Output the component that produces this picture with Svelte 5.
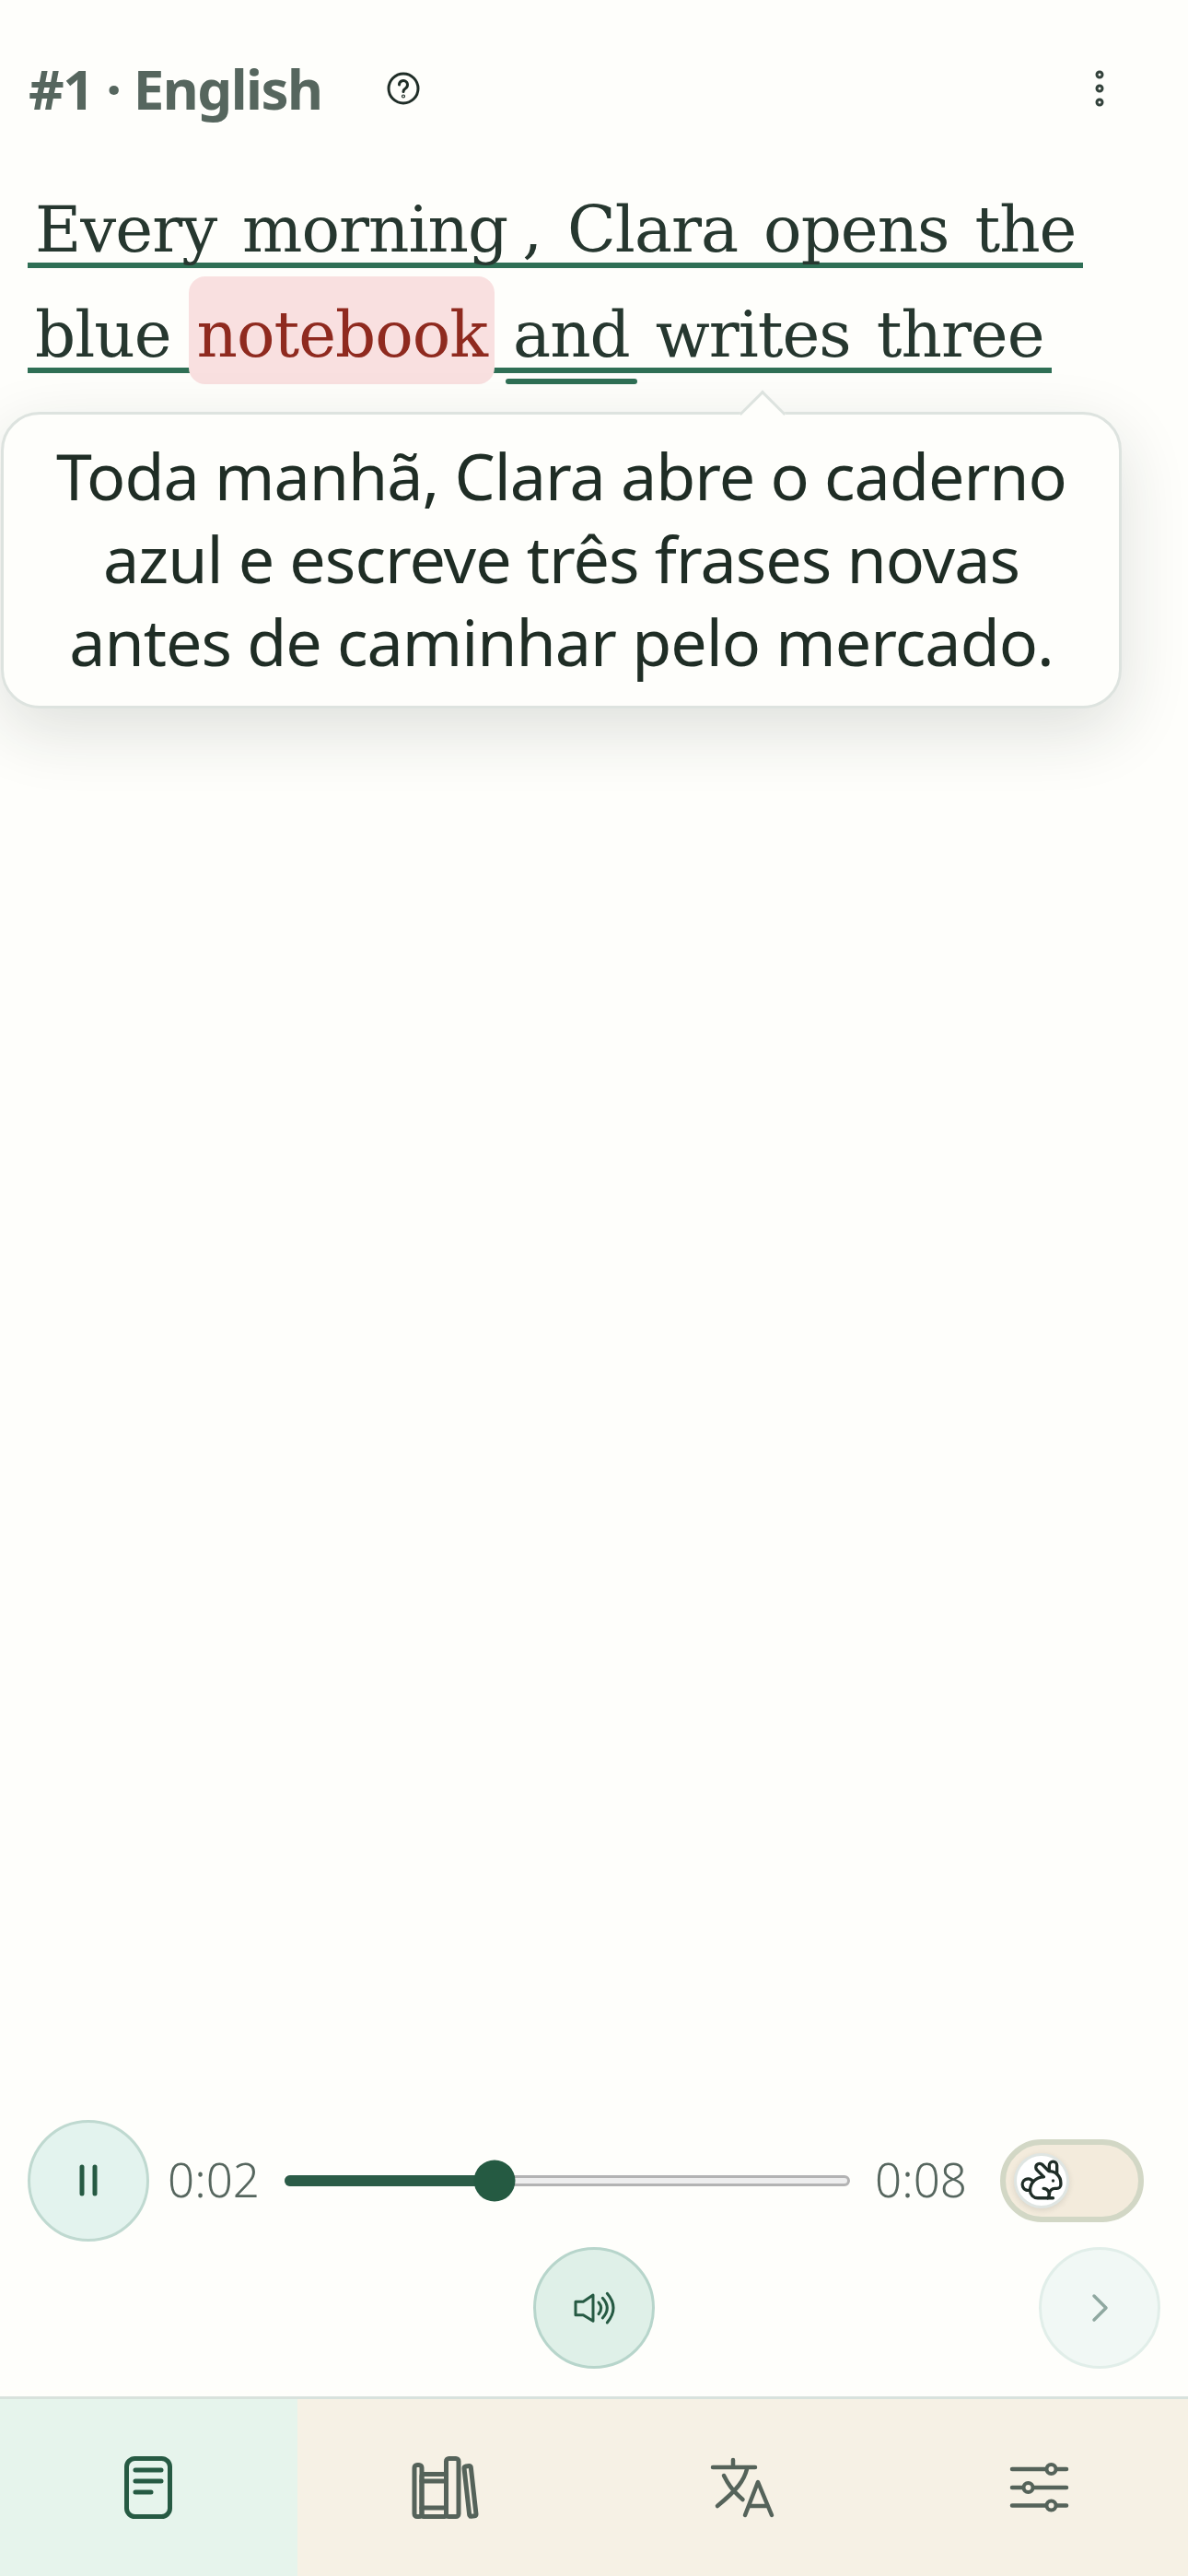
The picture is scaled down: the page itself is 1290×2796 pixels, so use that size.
<script>
  let elapsed = 2
  let duration = 8
  let progress = 37

  const line = [
    { t: 'Every' }, { t: 'morning' , glue: true }, { t: ',' }, { t: 'Clara' }, { t: 'opens' }, { t: 'the' },
    { t: 'blue' }, { t: 'notebook', hit: true }, { t: 'and', active: true }, { t: 'writes' }, { t: 'three' }
  ]

  const fmt = (s) => `0:${String(s).padStart(2, '0')}`
</script>

<div class="app">
  <header class="head">
    <h1>#1 · English</h1>
    <svg class="help" width="36" height="36" viewBox="0 0 36 36" fill="none" stroke="currentColor" stroke-width="3" stroke-linecap="round">
      <circle cx="18" cy="18" r="16" />
      <path d="M13.5 14a4.5 4.5 0 1 1 7 3.7c-1.6 1-2.5 2-2.5 3.8" />
      <circle cx="18" cy="26.5" r="0.6" />
    </svg>
    <svg class="kebab" width="18" height="48" viewBox="0 0 18 48" fill="none" stroke="currentColor" stroke-width="3">
      <circle cx="9" cy="9" r="3" />
      <circle cx="9" cy="24" r="3" />
      <circle cx="9" cy="39" r="3" />
    </svg>
  </header>

  <main class="reading">
    <p class="text">
      <span class="sentence">
        {#each line as w}
          <span class="w" class:hit={w.hit} class:active={w.active}>{w.t}</span>{#if !w.glue}{' '}{/if}
        {/each}
      </span>
    </p>

    <div class="tip">
      Toda manhã, Clara abre o caderno azul e escreve três frases novas antes de caminhar pelo mercado.
    </div>
  </main>

  <section class="player">
    <div class="row">
      <button class="round pause" aria-label="Pause">
        <svg width="24" height="36" viewBox="0 0 24 36" fill="none" stroke="currentColor" stroke-width="5" stroke-linecap="round">
          <path d="M5 3v29M19 3v29" />
        </svg>
      </button>
      <span class="time">{fmt(elapsed)}</span>
      <div class="track">
        <div class="fill" style="width: {progress}%"></div>
        <div class="knob" style="left: {progress}%"></div>
      </div>
      <span class="time">{fmt(duration)}</span>
      <div class="toggle">
        <span class="thumb">
          <svg width="50" height="50" viewBox="0 0 24 24" fill="none" stroke="currentColor" stroke-width="1.6" stroke-linecap="round" stroke-linejoin="round">
            <path d="M13 16a3 3 0 0 1 2.24 5" />
            <path d="M18 12h.01" />
            <path d="M18 21h-8a4 4 0 0 1-4-4 7 7 0 0 1 7-7h.2L9.6 6.4a1 1 0 1 1 2.8-2.8L15.8 7h.2c3.3 0 6 2.7 6 6v1a2 2 0 0 1-2 2h-1a3 3 0 0 0-3 3" />
            <path d="M20 8.54V4a2 2 0 1 0-4 0v3" />
            <path d="M7.612 12.524a3 3 0 1 0-1.6 4.3" />
          </svg>
        </span>
      </div>
    </div>

    <div class="row second">
      <button class="round speak" aria-label="Speak">
        <svg width="60" height="60" viewBox="0 0 60 60" fill="none" stroke="currentColor" stroke-width="3" stroke-linecap="round" stroke-linejoin="round">
          <path d="M10 23.3h8.3L29 16v28.3l-10.7-6.6H10z" />
          <path d="M35 24q5.4 6.3 0 12.7" />
          <path d="M39.3 19.3q10 10.9 0 21.7" />
          <path d="M44.3 14.3q13.4 15.8 0 31.7" />
        </svg>
      </button>
      <button class="round next" aria-label="Next">
        <svg width="24" height="36" viewBox="0 0 24 36" fill="none" stroke="currentColor" stroke-width="3.5" stroke-linecap="round" stroke-linejoin="round">
          <path d="M6 5l13 13L6 31" />
        </svg>
      </button>
    </div>
  </section>

  <nav class="tabs">
    <div class="tab on">
      <svg width="84" height="84" viewBox="0 0 84 84" fill="none" stroke="currentColor" stroke-width="5" stroke-linecap="round">
        <rect x="18.5" y="10.5" width="47" height="63" rx="9" />
        <path d="M28 23h28M28 35h28M28 47h17" />
      </svg>
    </div>
    <div class="tab">
      <svg width="84" height="84" viewBox="0 0 84 84" fill="none" stroke="currentColor" stroke-width="5" stroke-linecap="round" stroke-linejoin="round">
        <rect x="8" y="17.5" width="8" height="56" rx="3" />
        <rect x="16" y="27.5" width="26.5" height="46" rx="2" />
        <path d="M16 35h26.5M16 64h26.5" />
        <rect x="42.5" y="10.5" width="13.5" height="63" rx="3" />
        <path d="M64 19l3.5-.5q1.5 0 1.8 1.5L75 71q0 1.5-1.5 1.8l-4 .5q-1.5 0-1.8-1.5L62 21q0-1.5 2-2z" />
      </svg>
    </div>
    <div class="tab">
      <svg width="84" height="84" viewBox="0 0 84 84" fill="none" stroke="currentColor" stroke-width="4.5" stroke-linecap="round" stroke-linejoin="round">
        <path d="M10 20h46M32 12v8" />
        <path d="M47 22c-3 12-10 22-32 40" />
        <path d="M22 29c4 8 8 15 20.5 26" />
        <path d="M45 72l14-36 15 36M51 62h17" />
      </svg>
    </div>
    <div class="tab">
      <svg width="84" height="84" viewBox="0 0 84 84" fill="none" stroke="currentColor" stroke-width="4.5" stroke-linecap="round">
        <path d="M12 22h59M12 42h59M12 61.5h59" />
        <g fill="#f6f1e5" stroke-width="4">
          <circle cx="54.5" cy="22" r="5" />
          <circle cx="29.5" cy="42" r="5" />
          <circle cx="54.5" cy="61.5" r="5" />
        </g>
      </svg>
    </div>
  </nav>
</div>

<style>
  :global(body) {
    margin: 0;
    background: #fefefb;
  }

  .app {
    display: flex;
    flex-direction: column;
    width: 1290px;
    height: 2796px;
    overflow: hidden;
    background: #fefefb;
    color: #24352d;
    font-family: "Noto Sans", sans-serif;
  }

  .head {
    display: flex;
    align-items: center;
    height: 72px;
    padding: 60px 87px 0 31px;
  }

  h1 {
    margin: 0;
    font-size: 60px;
    line-height: 72px;
    font-weight: 700;
    color: #56665e;
    letter-spacing: -1.5px;
  }

  .help {
    margin-left: 70px;
    color: #1f2d27;
  }

  .kebab {
    margin-left: auto;
    color: #33423b;
  }

  .reading {
    flex: 1;
    position: relative;
    padding: 60px 0 0 30px;
  }

  .text {
    margin: 0;
    width: 1180px;
    font-family: "DejaVu Serif", serif;
    font-size: 69px;
    line-height: 114px;
    letter-spacing: -1px;
    word-spacing: -9px;
    color: #26372f;
  }

  .sentence {
    padding-bottom: 2px;
    background: linear-gradient(#2f6f55, #2f6f55) repeat-x left bottom / 100% 6px;
    -webkit-box-decoration-break: clone;
    box-decoration-break: clone;
  }

  .w {
    position: relative;
    padding: 0 8px;
  }

  .hit {
    display: inline-block;
    margin-top: -6px;
    padding-top: 9px;
    line-height: 108px;
    border-radius: 18px;
    background: #f9e0e0;
    color: #8f2a1f;
  }

  .active::after {
    content: "";
    position: absolute;
    left: 0;
    right: 0;
    bottom: -14px;
    height: 6px;
    border-radius: 3px;
    background: #2f6f55;
  }

  .tip {
    position: absolute;
    left: 1px;
    top: 315px;
    box-sizing: border-box;
    width: 1217px;
    height: 322px;
    padding: 21px 40px;
    border: 3px solid #dde3df;
    border-radius: 42px;
    background: #fefefb;
    box-shadow: 0 24px 72px rgba(30, 45, 38, 0.14);
    font-size: 70px;
    line-height: 90px;
    letter-spacing: -1px;
    text-align: center;
    color: #1f2d25;
  }

  .tip::before {
    content: "";
    position: absolute;
    left: 806px;
    top: -19px;
    width: 36px;
    height: 36px;
    box-sizing: border-box;
    border-top: 3px solid #dde3df;
    border-left: 3px solid #dde3df;
    background: #fefefb;
    transform: rotate(45deg);
  }

  .player {
    display: flex;
    flex-direction: column;
    gap: 6px;
    padding: 0 30px 30px;
  }

  .row {
    display: flex;
    align-items: center;
    gap: 27px;
    padding-right: 18px;
  }

  .second {
    justify-content: flex-end;
    gap: 417px;
    padding-right: 0;
  }

  .round {
    display: flex;
    align-items: center;
    justify-content: center;
    flex: none;
    box-sizing: border-box;
    width: 132px;
    height: 132px;
    padding: 0;
    border-radius: 50%;
    border: 3px solid #bfd9d0;
    background: #e3f3ee;
    color: #265a43;
  }

  .pause {
    margin-right: -7px;
  }

  .speak {
    background: #dff0e8;
    border-color: #b7d5cb;
  }

  .next {
    background: #f1f8f5;
    border-color: #e1eee9;
    color: #8fa8a0;
  }

  .time {
    flex: none;
    width: 100px;
    padding-bottom: 4px;
    font-size: 51px;
    line-height: 60px;
    color: #56665e;
    font-weight: 350;
    letter-spacing: 0;
    text-align: center;
    white-space: nowrap;
  }

  .track {
    flex: 1;
    position: relative;
    box-sizing: border-box;
    height: 12px;
    border: 3px solid #b3b3b3;
    border-radius: 6px;
    background: #eeeeee;
  }

  .fill {
    position: absolute;
    left: -3px;
    top: -3px;
    height: 12px;
    border-radius: 6px 0 0 6px;
    background: #2b5c47;
  }

  .knob {
    position: absolute;
    top: 50%;
    width: 45px;
    height: 45px;
    border-radius: 50%;
    background: #255a42;
    transform: translate(-50%, -50%);
  }

  .toggle {
    display: flex;
    align-items: center;
    flex: none;
    box-sizing: border-box;
    width: 156px;
    height: 90px;
    margin-left: 9px;
    padding-left: 9px;
    border: 6px solid #d2d7c5;
    border-radius: 45px;
    background: #f3ebdc;
  }

  .thumb {
    display: flex;
    align-items: center;
    justify-content: center;
    flex: none;
    box-sizing: border-box;
    width: 60px;
    height: 60px;
    border: 3px solid #dfe5e2;
    border-radius: 50%;
    background: #ffffff;
    color: #1f2d27;
    box-shadow: 0 2px 6px rgba(30, 45, 38, 0.12);
  }

  .tabs {
    display: grid;
    grid-template-columns: repeat(4, 1fr);
    height: 192px;
    border-top: 3px solid #d8e2dd;
    background: #f6f1e5;
  }

  .tab {
    display: flex;
    align-items: center;
    justify-content: center;
    color: #55635a;
  }

  .tab.on {
    background: #e6f4ec;
    color: #265a43;
  }
</style>
